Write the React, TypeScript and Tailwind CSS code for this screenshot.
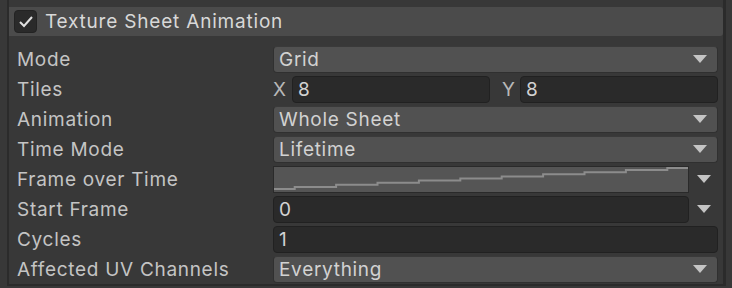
import React from "react";

const Arrow = () => (
  <svg width="14" height="8" viewBox="0 0 14 8" className="shrink-0">
    <polygon points="0,0 14,0 7,8" fill="#c4c4c4" />
  </svg>
);

const Label = ({ children }: { children: React.ReactNode }) => (
  <div className="w-[264px] shrink-0 pl-[8px] text-[#c4c4c4] whitespace-nowrap">{children}</div>
);

const Dropdown = ({ value }: { value: string }) => (
  <div className="flex-1 h-[27px] flex items-center justify-between rounded-[4px] bg-[#515151] border border-[#303030] border-t-[#3a3a3a] pl-[5px] pr-[10px]">
    <span className="text-[#d2d2d2]">{value}</span>
    <Arrow />
  </div>
);

const Field = ({ value, className = "" }: { value: string; className?: string }) => (
  <div className={`h-[27px] flex items-center rounded-[4px] bg-[#2a2a2a] border border-[#212121] pl-[5px] text-[#d2d2d2] ${className}`}>
    {value}
  </div>
);

const Row = ({ children }: { children: React.ReactNode }) => (
  <div className="h-[30px] flex items-center pr-[5px]">{children}</div>
);

const Curve = () => {
  const pts: string[] = [];
  const w = 414;
  const seg = w / 10;
  let x = 0;
  let y = 22;
  pts.push(`${x},${y}`);
  x = seg / 2;
  for (let i = 0; i < 10; i++) {
    pts.push(`${x},${y}`);
    y -= 2.1;
    pts.push(`${x},${y}`);
    x += seg;
  }
  pts.push(`${w},${y}`);
  return (
    <svg width="414" height="24" viewBox="0 0 414 24" className="block">
      <polyline points={pts.join(" ")} fill="none" stroke="#8c8c8c" strokeWidth="2" />
    </svg>
  );
};

export default function App() {
  return (
    <div
      className="w-[732px] h-[288px] bg-[#383838] overflow-hidden text-[19px] tracking-[0.7px] leading-none"
      style={{ fontFamily: "Inter, 'Noto Sans', sans-serif" }}
    >
      <div className="ml-[7px] w-[719px] h-[286px] border-l-2 border-r-[3px] border-b-2 border-[#2b2b2b] bg-[#383838] flex flex-col">
        <div className="mt-[7px] h-[29px] bg-[#4b4b4b] rounded-r-[3px] flex items-center pl-[5px]">
          <div className="w-[23px] h-[23px] rounded-[4px] bg-[#2a2a2a] border border-[#232323] flex items-center justify-center">
            <svg width="16" height="14" viewBox="0 0 16 14">
              <polyline points="2,7 6,11 14,2" fill="none" stroke="#e0e0e0" strokeWidth="2" />
            </svg>
          </div>
          <span className="ml-[8px] text-[#d8d8d8] text-[19px] tracking-[0.8px]">Texture Sheet Animation</span>
        </div>
        <div className="mt-[8px] flex flex-col">
          <Row>
            <Label>Mode</Label>
            <Dropdown value="Grid" />
          </Row>
          <Row>
            <Label>Tiles</Label>
            <div className="flex-1 flex items-center">
              <span className="text-[#b8b8b8] w-[19px]">X</span>
              <Field value="8" className="w-[198px]" />
              <span className="text-[#b8b8b8] ml-[12px] w-[18px]">Y</span>
              <Field value="8" className="flex-1" />
            </div>
          </Row>
          <Row>
            <Label>Animation</Label>
            <Dropdown value="Whole Sheet" />
          </Row>
          <Row>
            <Label>Time Mode</Label>
            <Dropdown value="Lifetime" />
          </Row>
          <Row>
            <Label>Frame over Time</Label>
            <div className="flex-1 flex items-center">
              <div className="w-[416px] h-[27px] bg-[#555555] border border-[#2a2a2a] overflow-hidden">
                <Curve />
              </div>
              <div className="ml-[8px]">
                <Arrow />
              </div>
            </div>
          </Row>
          <Row>
            <Label>Start Frame</Label>
            <div className="flex-1 flex items-center">
              <Field value="0" className="w-[416px]" />
              <div className="ml-[8px]">
                <Arrow />
              </div>
            </div>
          </Row>
          <Row>
            <Label>Cycles</Label>
            <Field value="1" className="flex-1" />
          </Row>
          <Row>
            <Label>Affected UV Channels</Label>
            <Dropdown value="Everything" />
          </Row>
        </div>
      </div>
    </div>
  );
}
